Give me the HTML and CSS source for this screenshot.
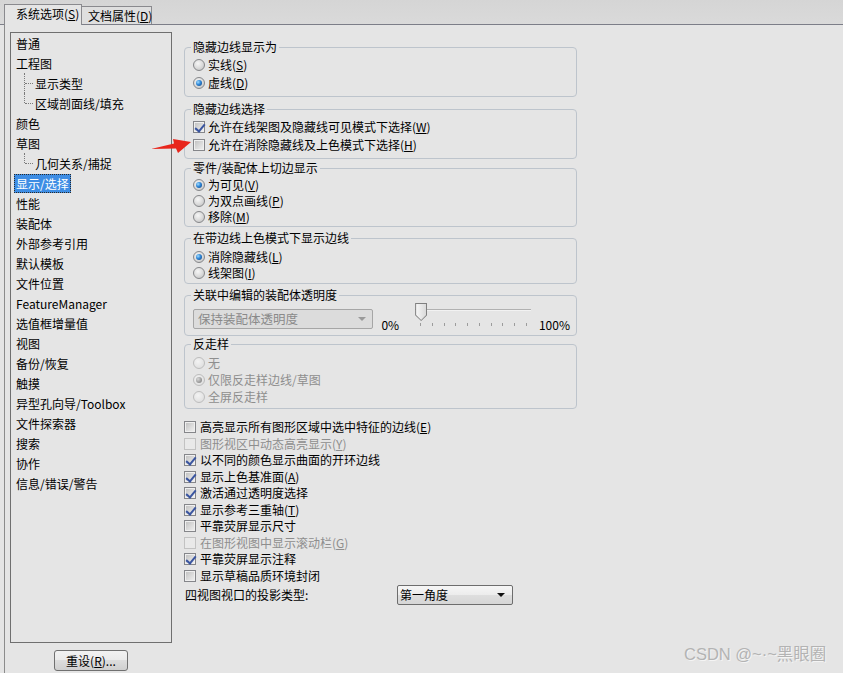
FILE: index.html
```html
<!DOCTYPE html>
<html lang="zh-CN">
<head>
<meta charset="utf-8">
<title>系统选项 - 显示/选择</title>
<link rel="stylesheet" href="styles.css">
</head>
<body>
<div class="tabs">
  <div class="tab tab-active">系统选项(<u>S</u>)</div>
  <div class="tab tab-idle">文档属性(<u>D</u>)</div>
</div>
<div class="page">
  <div class="left-col">
    <ul class="tree">
      <li class="node"><span class="lbl">普通</span></li>
      <li class="node"><span class="lbl">工程图</span></li>
      <li class="node child"><span class="lbl">显示类型</span></li>
      <li class="node child last"><span class="lbl">区域剖面线/填充</span></li>
      <li class="node"><span class="lbl">颜色</span></li>
      <li class="node"><span class="lbl">草图</span></li>
      <li class="node child last"><span class="lbl">几何关系/捕捉</span></li>
      <li class="node"><span class="lbl sel">显示/选择</span></li>
      <li class="node"><span class="lbl">性能</span></li>
      <li class="node"><span class="lbl">装配体</span></li>
      <li class="node"><span class="lbl">外部参考引用</span></li>
      <li class="node"><span class="lbl">默认模板</span></li>
      <li class="node"><span class="lbl">文件位置</span></li>
      <li class="node"><span class="lbl">FeatureManager</span></li>
      <li class="node"><span class="lbl">选值框增量值</span></li>
      <li class="node"><span class="lbl">视图</span></li>
      <li class="node"><span class="lbl">备份/恢复</span></li>
      <li class="node"><span class="lbl">触摸</span></li>
      <li class="node"><span class="lbl">异型孔向导/Toolbox</span></li>
      <li class="node"><span class="lbl">文件探索器</span></li>
      <li class="node"><span class="lbl">搜索</span></li>
      <li class="node"><span class="lbl">协作</span></li>
      <li class="node"><span class="lbl">信息/错误/警告</span></li>
    </ul>
    <div class="btn-row"><button class="btn">重设(<u>R</u>)...</button></div>
  </div>

  <div class="right-col">
    <fieldset class="grp g1">
      <legend>隐藏边线显示为</legend>
      <div class="row r18"><span class="radio"></span><span>实线(<u>S</u>)</span></div>
      <div class="row r18"><span class="radio on"></span><span>虚线(<u>D</u>)</span></div>
    </fieldset>

    <fieldset class="grp g2">
      <legend>隐藏边线选择</legend>
      <div class="row r18"><span class="cb on"></span><span>允许在线架图及隐藏线可见模式下选择(<u>W</u>)</span></div>
      <div class="row r18"><span class="cb"></span><span>允许在消除隐藏线及上色模式下选择(<u>H</u>)</span></div>
    </fieldset>

    <fieldset class="grp g3">
      <legend>零件/装配体上切边显示</legend>
      <div class="row r16"><span class="radio on"></span><span>为可见(<u>V</u>)</span></div>
      <div class="row r16"><span class="radio"></span><span>为双点画线(<u>P</u>)</span></div>
      <div class="row r16"><span class="radio"></span><span>移除(<u>M</u>)</span></div>
    </fieldset>

    <fieldset class="grp g4">
      <legend>在带边线上色模式下显示边线</legend>
      <div class="row r16"><span class="radio on"></span><span>消除隐藏线(<u>L</u>)</span></div>
      <div class="row r16"><span class="radio"></span><span>线架图(<u>I</u>)</span></div>
    </fieldset>

    <fieldset class="grp g5">
      <legend>关联中编辑的装配体透明度</legend>
      <div class="trans-row">
        <div class="combo combo-off"><span>保持装配体透明度</span><span class="caret"></span></div>
        <span class="pct">0%</span>
        <div class="slider">
          <div class="track"></div>
          <div class="thumb"></div>
          <div class="ticks">
            <i></i><i></i><i></i><i></i><i></i><i></i><i></i><i></i><i></i><i></i>
          </div>
        </div>
        <span class="pct pct-end">100%</span>
      </div>
    </fieldset>

    <fieldset class="grp g6">
      <legend>反走样</legend>
      <div class="row r17 off"><span class="radio"></span><span>无</span></div>
      <div class="row r17 off"><span class="radio on"></span><span>仅限反走样边线/草图</span></div>
      <div class="row r17 off"><span class="radio"></span><span>全屏反走样</span></div>
    </fieldset>

    <div class="checks">
      <div class="row ck"><span class="cb"></span><span>高亮显示所有图形区域中选中特征的边线(<u>E</u>)</span></div>
      <div class="row ck off"><span class="cb"></span><span>图形视区中动态高亮显示(<u>Y</u>)</span></div>
      <div class="row ck"><span class="cb on"></span><span>以不同的颜色显示曲面的开环边线</span></div>
      <div class="row ck"><span class="cb on"></span><span>显示上色基准面(<u>A</u>)</span></div>
      <div class="row ck"><span class="cb on"></span><span>激活通过透明度选择</span></div>
      <div class="row ck"><span class="cb on"></span><span>显示参考三重轴(<u>T</u>)</span></div>
      <div class="row ck"><span class="cb"></span><span>平靠荧屏显示尺寸</span></div>
      <div class="row ck off"><span class="cb"></span><span>在图形视图中显示滚动栏(<u>G</u>)</span></div>
      <div class="row ck"><span class="cb on"></span><span>平靠荧屏显示注释</span></div>
      <div class="row ck"><span class="cb"></span><span>显示草稿品质环境封闭</span></div>
    </div>

    <div class="proj-row">
      <span class="proj-label">四视图视口的投影类型:</span>
      <div class="combo combo-on"><span>第一角度</span><span class="caret"></span></div>
    </div>
  </div>
</div>

<svg class="mark-arrow" width="46" height="20" viewBox="0 0 46 20">
  <polygon points="3,13 26,7.5 25,3 43,6 30,17 28,12.5" fill="#e8261c"/>
</svg>
<div class="watermark">CSDN @~·~黑眼圈</div>
</body>
</html>
```

FILE: styles.css
```css
* { box-sizing: border-box; }

html, body {
  margin: 0;
  padding: 0;
}

body {
  width: 843px;
  height: 673px;
  overflow: hidden;
  background: #e5e5e5;
  font-family: "Noto Sans CJK SC", "Noto Sans", sans-serif;
  font-size: 12px;
  color: #000;
  position: relative;
}

u { text-decoration: underline; text-underline-offset: 1px; }

/* ---------- tabs ---------- */
.tabs {
  height: 25px;
  background: linear-gradient(#d5d5d5, #dadada);
  border-bottom: 1px solid #7c7e88;
  display: flex;
  align-items: flex-end;
  padding-left: 4px;
}

.tab {
  border: 1px solid #8a8a8e;
  border-bottom: none;
  line-height: 16px;
  white-space: nowrap;
}

.tab-active {
  width: 78px;
  height: 21px;
  margin-bottom: -1px;
  background: #e5e5e5;
  padding: 1px 0 0 11px;
  position: relative;
  z-index: 1;
}

.tab-idle {
  width: 71px;
  height: 18px;
  margin-left: -1px;
  background: #dfdfdf;
  padding: 1px 0 0 6px;
}

/* ---------- page ---------- */
.page {
  display: flex;
  margin-left: 4px;
  border-left: 1px solid #8c8c8c;
  height: 648px;
}

.left-col {
  padding: 7px 0 0 5px;
  width: 167px;
  display: flex;
  flex-direction: column;
}

.tree {
  list-style: none;
  margin: 0;
  padding: 0 0 0 3px;
  width: 162px;
  height: 611px;
  border: 1px solid #6f6f6f;
}

.node {
  height: 20px;
  display: flex;
  align-items: center;
  position: relative;
}

.lbl {
  line-height: 17px;
  padding: 0 1px;
  border: 1px dotted transparent;
  white-space: nowrap;
}

.lbl.sel {
  background: #3d8de4;
  color: #fff;
  border-color: #2a2a2a;
}

.child { padding-left: 19px; }

.child::before {
  content: "";
  position: absolute;
  left: 10px;
  top: 0;
  height: 100%;
  border-left: 1px dotted #7a7a7a;
}

.child.last::before { height: 50%; }

.child::after {
  content: "";
  position: absolute;
  left: 11px;
  top: 50%;
  width: 8px;
  border-top: 1px dotted #7a7a7a;
}

.btn-row {
  display: flex;
  justify-content: center;
  padding-top: 7px;
}

.btn {
  width: 74px;
  height: 21px;
  border: 1px solid #707070;
  border-radius: 3px;
  background: linear-gradient(#f2f2f2, #ebebeb 45%, #dddddd 50%, #cfcfcf);
  font-family: inherit;
  font-size: 12px;
  line-height: 17px;
  padding: 0;
  color: #000;
}

/* ---------- right column ---------- */
.right-col {
  margin-left: 12px;
  width: 393px;
  padding-top: 14px;
}

.grp {
  margin: 0;
  border: 1px solid #bdc4cc;
  border-radius: 4px;
  padding: 0 6px 0 8px;
  min-width: 0;
}

.grp legend {
  padding: 0 2px;
  margin-left: -2px;
  line-height: 16px;
}

.g1 { padding-top: 1px; padding-bottom: 4px; }
.g2 { margin-top: 4px; padding-top: 1px; padding-bottom: 4px; }
.g3 { margin-top: 1px; padding-top: 1px; padding-bottom: 1px; }
.g4 { margin-top: 3px; padding-top: 3px; padding-bottom: 2px; }
.g5 { margin-top: 3px; padding-top: 6px; padding-bottom: 4px; }
.g6 { margin-top: 0; padding-top: 2px; padding-bottom: 3px; }

.row {
  display: flex;
  align-items: center;
  gap: 3px;
  white-space: nowrap;
}

.r18 { height: 18px; line-height: 18px; }
.r17 { height: 17px; line-height: 17px; }
.r16 { height: 16px; line-height: 16px; }

.row.off { color: #8e8e8e; }

/* radio */
.radio {
  flex: none;
  width: 12px;
  height: 12px;
  border-radius: 50%;
  border: 1px solid #86878a;
  background: radial-gradient(circle at 40% 35%, #f6f6f6 0%, #dcdcdc 50%, #bcbcbc 100%);
  position: relative;
}

.radio.on::after {
  content: "";
  position: absolute;
  left: 2px;
  top: 2px;
  width: 6px;
  height: 6px;
  border-radius: 50%;
  background: radial-gradient(circle at 35% 35%, #9fdcff 0%, #2f86d6 45%, #0f3d78 100%);
}

.off .radio {
  border-color: #bdbdbd;
  background: radial-gradient(circle at 40% 35%, #f3f3f3, #dadada);
}

.off .radio.on::after {
  background: radial-gradient(circle at 35% 35%, #d8d8d8 0%, #9a9a9a 60%, #7a7a7a 100%);
}

/* checkbox */
.cb {
  flex: none;
  width: 12px;
  height: 12px;
  border: 1px solid #85868a;
  background: linear-gradient(135deg, #bdbdbd 0%, #d9d9d9 50%, #f2f2f2 100%);
  box-shadow: inset 0 0 0 1px #efefef;
  position: relative;
}

.cb.on::after {
  content: "";
  position: absolute;
  left: 3px;
  top: 0px;
  width: 4px;
  height: 8px;
  border-right: 2px solid #3a55a0;
  border-bottom: 2px solid #3a55a0;
  transform: rotate(40deg);
}

.off .cb {
  border-color: #c2c2c2;
  background: #e9e9e9;
  box-shadow: none;
}

/* transparency row */
.trans-row {
  display: flex;
  align-items: flex-start;
  height: 22px;
}

.combo {
  height: 20px;
  display: flex;
  align-items: center;
  justify-content: space-between;
  border-radius: 2px;
  padding: 0 6px 0 4px;
  line-height: 18px;
}

.combo-off {
  width: 182px;
  border: 1px solid #a6a6a6;
  background: #dcdcdc;
  color: #8a8a8a;
  padding-left: 4px;
  font-size: 12.5px;
}

.combo-off .caret { border-top-color: #9a9a9a; }

.caret {
  width: 0;
  height: 0;
  border-left: 4px solid transparent;
  border-right: 4px solid transparent;
  border-top: 4px solid #111;
}

.pct {
  margin: 8px 0 0 8px;
  line-height: 16px;
  color: #000;
}

.pct-end { margin-left: 5px; }

.slider {
  position: relative;
  width: 124px;
  height: 28px;
  margin: -6px 0 0 12px;
}

.track {
  position: absolute;
  left: 4px;
  top: 6px;
  width: 116px;
  height: 2px;
  background: #b1b1b1;
  border-bottom: 1px solid #f2f2f2;
}

.thumb {
  position: absolute;
  left: 4px;
  top: 0;
  width: 12px;
  height: 18px;
  background: #7f7f7f;
  clip-path: polygon(0 0, 100% 0, 100% 68%, 50% 100%, 0 68%);
}

.thumb::after {
  content: "";
  position: absolute;
  left: 1px;
  top: 1px;
  right: 1px;
  bottom: 1px;
  background: linear-gradient(90deg, #f6f6f6, #dadada);
  clip-path: polygon(0 0, 100% 0, 100% 68%, 50% 100%, 0 68%);
}

.ticks {
  position: absolute;
  left: 9px;
  top: 20px;
  width: 107px;
  height: 4px;
  display: flex;
  justify-content: space-between;
}

.ticks i {
  display: block;
  width: 1px;
  height: 3px;
  background: #9c9c9c;
}

/* checkbox list */
.checks {
  margin-top: 10px;
}

.row.ck {
  height: 16.5px;
  line-height: 16.5px;
  gap: 4px;
}

.proj-row {
  display: flex;
  align-items: center;
  height: 20px;
  margin-top: 0.5px;
}

.proj-label {
  width: 213px;
  padding-left: 1px;
  line-height: 20px;
}

.combo-on {
  width: 116px;
  border: 1px solid #6d6d6d;
  background: linear-gradient(#f6f6f6, #ececec 50%, #dedede 51%, #d6d6d6);
  padding: 0 7px 0 2px;
}

/* overlays */
.mark-arrow {
  position: absolute;
  left: 148px;
  top: 136px;
}

.watermark {
  position: absolute;
  left: 684px;
  top: 643px;
  font-family: "Liberation Sans", "Noto Sans CJK SC", sans-serif;
  font-size: 16.5px;
  line-height: 22px;
  color: #b3b3b3;
  text-shadow: 1px 1px 0 #f4f4f4;
  white-space: nowrap;
}
```
